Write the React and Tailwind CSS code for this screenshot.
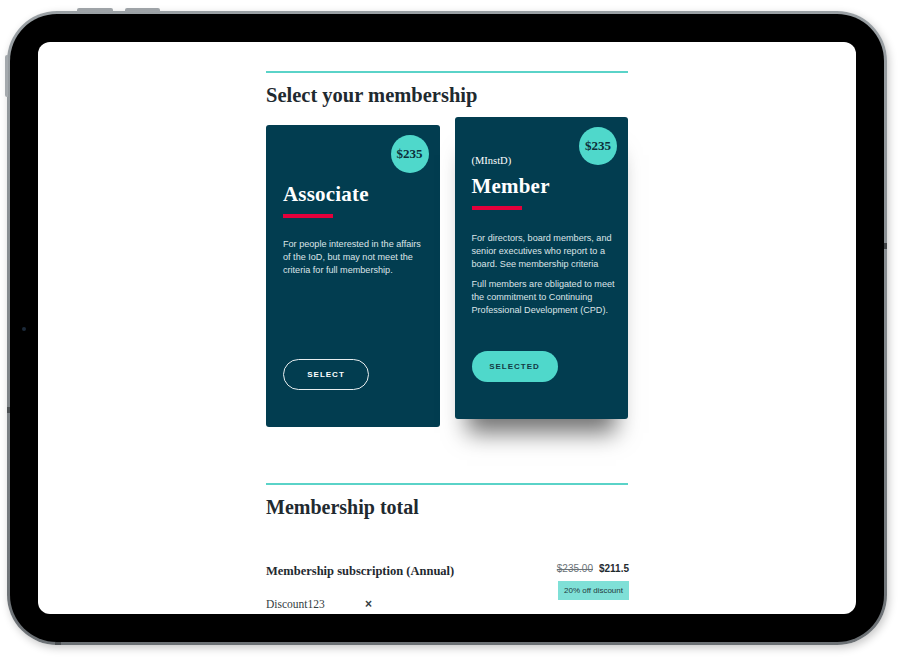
const serif = { fontFamily: '"Liberation Serif", "DejaVu Serif", serif' };

function PriceBadge() {
  return (
    <div
      className="absolute top-[10px] right-[11px] w-[38px] h-[38px] rounded-full bg-[#4fd8cb] flex items-center justify-center text-[13px] font-bold text-[#0d2f3a]"
      style={serif}
    >
      $235
    </div>
  );
}

function PlanCard({ eyebrow, title, paragraphs, selected }) {
  return (
    <div
      className={
        "relative flex flex-col h-[302px] rounded-[3px] bg-[#023d50] pl-[17px] pr-[10px] pb-[37px] " +
        (selected
          ? "-translate-y-2 shadow-[0_26px_22px_-12px_rgba(0,0,0,0.55)]"
          : "")
      }
    >
      <PriceBadge />
      <div className="h-[82px] flex flex-col justify-end">
        {eyebrow && (
          <div className="text-[10.5px] leading-[14px] text-white mb-[5px]" style={serif}>
            {eyebrow}
          </div>
        )}
        <div className="text-[21px] leading-[26px] text-white font-bold tracking-[0.2px]" style={serif}>
          {title}
        </div>
      </div>
      <div className="mt-[7px] h-[4px] w-[50px] bg-[#e4003b]" />
      <div className={(selected ? "mt-[22px]" : "mt-[20px]") + " flex flex-col gap-[7px]"}>
        {paragraphs.map((lines, i) => (
          <p key={i} className="whitespace-nowrap text-[9.1px] leading-[13px] text-[#dde5e8] font-['Liberation_Sans',Arial,sans-serif]">
            {lines.map((l, j) => (
              <span key={j} className="block">
                {l}
              </span>
            ))}
          </p>
        ))}
      </div>
      <div className="mt-auto">
        {selected ? (
          <button className="w-[86px] h-[31px] rounded-full bg-[#4fd8cb] text-[#143a44] text-[8px] font-bold tracking-[1px] font-['Liberation_Sans',Arial,sans-serif]">
            SELECTED
          </button>
        ) : (
          <button className="w-[86px] h-[31px] rounded-full border-[1.5px] border-[#e8eef0] text-white text-[8px] font-bold tracking-[1px] font-['Liberation_Sans',Arial,sans-serif]">
            SELECT
          </button>
        )}
      </div>
    </div>
  );
}

function Screen() {
  return (
    <div className="h-full w-full bg-white rounded-[12px] overflow-hidden">
      <div className="mx-auto w-[362px] pt-[29px]">
        <div className="h-[2px] bg-[#5ad3c8]" />
        <h2 className="mt-[8px] text-[20.5px] leading-[28px] font-bold text-[#1f2a30]" style={serif}>
          Select your membership
        </h2>
        <div className="mt-[16px] grid grid-cols-2 gap-[15px]">
          <PlanCard
            title="Associate"
            paragraphs={[
              [
                "For people interested in the affairs",
                "of the IoD, but may not meet the",
                "criteria for full membership.",
              ],
            ]}
          />
          <PlanCard
            selected
            eyebrow="(MInstD)"
            title="Member"
            paragraphs={[
              [
                "For directors, board members, and",
                "senior executives who report to a",
                "board. See membership criteria",
              ],
              [
                "Full members are obligated to meet",
                "the commitment to Continuing",
                "Professional Development (CPD).",
              ],
            ]}
          />
        </div>

        <div className="mt-[56px] h-[2px] bg-[#5ad3c8]" />
        <h2 className="mt-[8px] text-[20px] leading-[28px] font-bold text-[#1f2a30]" style={serif}>
          Membership total
        </h2>
        <div className="mt-[42px] flex justify-between items-start">
          <div>
            <div className="text-[12.5px] leading-[16px] font-bold text-[#1f2a30]" style={serif}>
              Membership subscription (Annual)
            </div>
            <div className="mt-[17px] flex items-center text-[11.5px] leading-[16px] text-[#333d42]" style={serif}>
              <span className="w-[99px]">Discount123</span>
              <span className="text-[12px] font-bold font-['Liberation_Sans',Arial,sans-serif]">×</span>
            </div>
          </div>
          <div className="-mt-[1px] flex flex-col items-end -mr-[1px]">
            <div className="flex gap-[6px] text-[10px] leading-[14px] font-['Liberation_Sans',Arial,sans-serif]">
              <span className="line-through text-[#6b7378]">$235.00</span>
              <span className="font-bold text-[#1f2a30]">$211.5</span>
            </div>
            <div className="mt-[5px] h-[19px] w-[71px] bg-[#7fe0d7] flex items-center justify-center text-[8px] text-[#1f3a40] font-['Liberation_Sans',Arial,sans-serif]">
              20% off discount
            </div>
          </div>
        </div>
      </div>
    </div>
  );
}

export default function App() {
  return (
    <div className="w-[906px] h-[660px] bg-white pl-[7px] pt-[11px]">
      <div className="relative w-[880px] h-[634px] rounded-[50px] p-[3px] bg-gradient-to-b from-[#9aa0a4] to-[#6c7175] shadow-[2px_3px_8px_rgba(0,0,0,0.22)]">
        {/* top buttons */}
        <div className="absolute -top-[3px] left-[70px] w-[36px] h-[4px] rounded-t-[2px] bg-[#9ea3a7]" />
        <div className="absolute -top-[3px] left-[118px] w-[35px] h-[4px] rounded-t-[2px] bg-[#9ea3a7]" />
        {/* side markers */}
        <div className="absolute -left-[2px] top-[44px] w-[3px] h-[42px] rounded-l-[2px] bg-[#a4a9ad]" />
        <div className="absolute left-0 top-[396px] w-[3px] h-[6px] bg-[#4b4f52]" />
        <div className="absolute right-0 top-[232px] w-[3px] h-[6px] bg-[#3f4346]" />
        <div className="absolute left-[48px] bottom-0 w-[6px] h-[3px] bg-[#4b4f52]" />
        <div className="h-full w-full rounded-[47px] bg-black p-[28px] relative">
          {/* camera */}
          <div className="absolute left-[12px] top-[313px] w-[4px] h-[4px] rounded-full bg-[#1c2a3a]" />
          <Screen />
        </div>
      </div>
    </div>
  );
}
